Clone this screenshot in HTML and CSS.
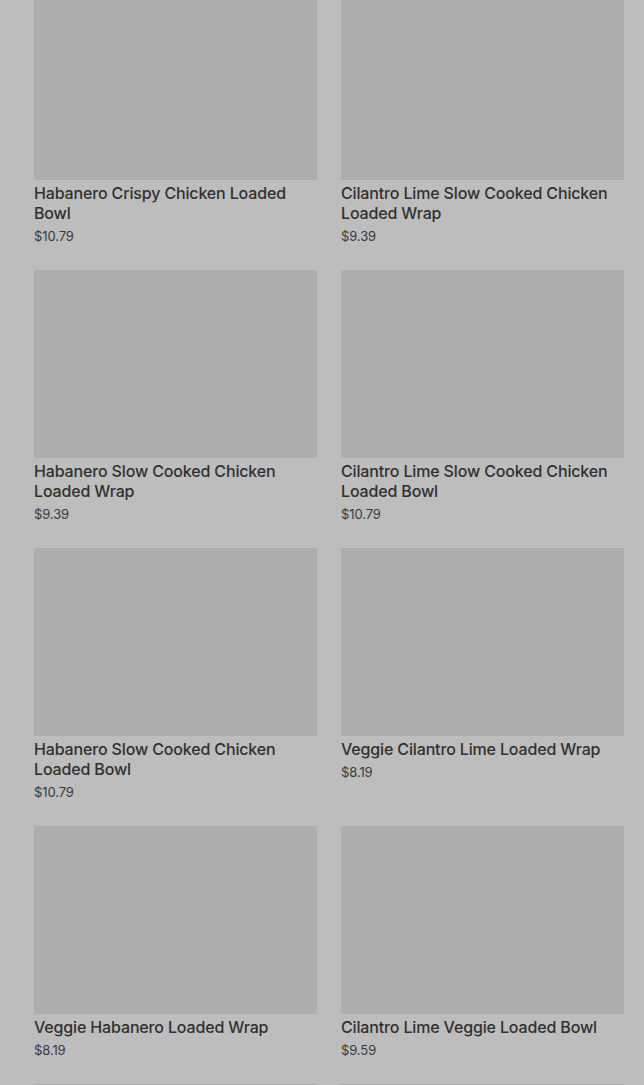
FILE: index.html
```html
<!DOCTYPE html>
<html lang="en">
<head>
    <meta charset="UTF-8">
    <title>Menu</title>
    <link rel="stylesheet" href="styles.css">
</head>
<body>
    <div class="menu">
        <div class="grid">
            <div class="card">
                <div class="photo"></div>
                <div class="name">Habanero Crispy Chicken Loaded Bowl</div>
                <div class="price">$10.79</div>
            </div>
            <div class="card">
                <div class="photo"></div>
                <div class="name">Cilantro Lime Slow Cooked Chicken Loaded Wrap</div>
                <div class="price">$9.39</div>
            </div>
            <div class="card">
                <div class="photo"></div>
                <div class="name">Habanero Slow Cooked Chicken Loaded Wrap</div>
                <div class="price">$9.39</div>
            </div>
            <div class="card">
                <div class="photo"></div>
                <div class="name">Cilantro Lime Slow Cooked Chicken Loaded Bowl</div>
                <div class="price">$10.79</div>
            </div>
            <div class="card">
                <div class="photo"></div>
                <div class="name">Habanero Slow Cooked Chicken Loaded Bowl</div>
                <div class="price">$10.79</div>
            </div>
            <div class="card">
                <div class="photo"></div>
                <div class="name">Veggie Cilantro Lime Loaded Wrap</div>
                <div class="price">$8.19</div>
            </div>
            <div class="card">
                <div class="photo"></div>
                <div class="name">Veggie Habanero Loaded Wrap</div>
                <div class="price">$8.19</div>
            </div>
            <div class="card">
                <div class="photo"></div>
                <div class="name">Cilantro Lime Veggie Loaded Bowl</div>
                <div class="price">$9.59</div>
            </div>
            <!-- next row only peeks in at the bottom -->
            <div class="card">
                <div class="photo"></div>
            </div>
            <div class="card">
                <div class="photo"></div>
            </div>
        </div>
    </div>
</body>
</html>
```

FILE: styles.css
```css
html, body {
    margin: 0;
    height: 100%;
    overflow: hidden;
}
body {
    background-color: #bdbdbd;
    font-family: Inter, "Noto Sans", sans-serif;
    color: #303030;
}
.menu {
    padding: 0 20px 0 34px;
    margin-top: -8px;
}
.grid {
    display: grid;
    grid-template-columns: 1fr 1fr;
    column-gap: 24px;
    row-gap: 25px;
}
.photo {
    height: 188px;
    background-color: #adadad;
}
.name {
    margin-top: 3px;
    font-size: 16px;
    line-height: 20px;
    font-weight: 500;
    letter-spacing: -0.15px;
}
.price {
    margin-top: 4px;
    font-size: 13px;
    line-height: 18px;
    letter-spacing: -0.1px;
    color: #3a3a3a;
}
```
